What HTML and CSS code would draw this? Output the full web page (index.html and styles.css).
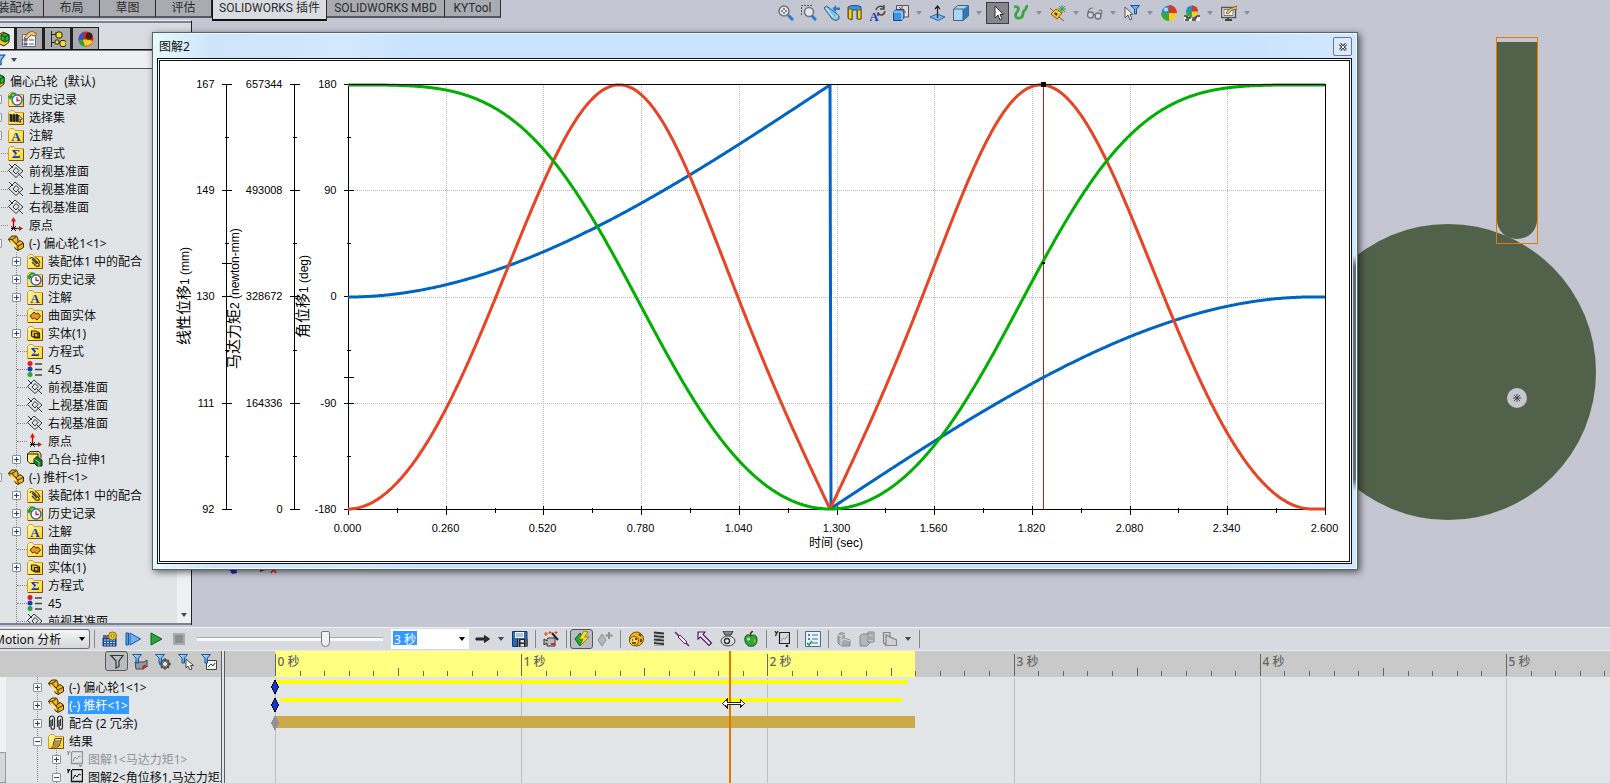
FILE: index.html
```html
<!DOCTYPE html>
<html lang="zh-CN">
<head>
    <meta charset="UTF-8">
    <meta name="viewport" content="width=device-width, initial-scale=1.0">
    <title>SOLIDWORKS Motion - 图解2</title>
    <link rel="stylesheet" href="styles.css">
</head>
<body>
    <svg class="sprite" aria-hidden="true">
        <defs>
            <linearGradient id="g-folder" x1="0" y1="0" x2="1" y2="1"><stop offset="0" stop-color="#fff9b0"/><stop offset="1" stop-color="#fbd820"/></linearGradient>
            <linearGradient id="g-blue" x1="0" y1="0" x2="1" y2="1"><stop offset="0" stop-color="#d4f0ff"/><stop offset="1" stop-color="#2a80d0"/></linearGradient>
        </defs>
        <symbol id="folder" viewBox="0 0 16 16"><path d="M.5 15.500V3.500L2.500 1.500H5.500L7 3.500H15.500V15.500Z" fill="url(#g-folder)" stroke="#d99a20"/><path d="M1 15.500H15.500V4" fill="none" stroke="#8a4a00"/></symbol>
        <symbol id="history" viewBox="0 0 16 16"><use href="#folder"/><circle cx="9" cy="9" r="5" fill="#fff" stroke="#2a66c8" stroke-width="1.500"/><path d="M9 6V9.500H12" fill="none" stroke="#e02020" stroke-width="1.300"/><path d="M2 7C2 3 5 2 8 3" fill="none" stroke="#18a028" stroke-width="2"/><path d="M0 5H5L2 9Z" fill="#18a028"/></symbol>
        <symbol id="selset" viewBox="0 0 16 16"><use href="#folder"/><path d="M2 5L4 6V13L2 12ZM5 5L7 6V13L5 12ZM8 5L10 6V13L8 12Z" fill="#333" stroke="#111" stroke-width=".8"/><path d="M10.500 6L14.500 10L12 10.500L13 13H11V10Z" fill="#fff" stroke="#111" stroke-width=".8"/></symbol>
        <symbol id="note" viewBox="0 0 16 16"><use href="#folder"/><text x="8" y="13.500" class="glyph">A</text></symbol>
        <symbol id="equation" viewBox="0 0 16 16"><use href="#folder"/><text x="8" y="13" class="glyph">Σ</text></symbol>
        <symbol id="plane" viewBox="0 0 16 16"><path d="M.5 7.500L7 1L15 8L8 14.500ZM1 1L5 5M10 10L15 15M5 8L8 4.500L11 7.500L8 11Z" fill="none" stroke="#222" stroke-width=".9"/></symbol>
        <symbol id="origin" viewBox="0 0 16 16"><path d="M5.500 12V2" stroke="#a00" stroke-width="1.300"/><path d="M3 4.500L5.500 0L8 4.500Z" fill="#e01010"/><path d="M5 11.500H13" stroke="#333" stroke-width="1.300"/><path d="M11 9L15 11.500L11 14Z" fill="#a03010"/><path d="M3 9L8 14M8 9L3 14M3 11.500H8" stroke="#111"/></symbol>
        <symbol id="part" viewBox="0 0 16 16"><path d="M.5 4L4 1H8.500L10 4V7L12 5.500L15.500 8V12.500L10 15.500L7 13.500V11L1 5.500Z" fill="#f0b818" stroke="#3a2800"/><path d="M1 4L4 4.500L8 9L10 11.500V15M10 11L15 8.500M4 4.500L8 2M8 9L11 6" fill="none" stroke="#3a2800"/><path d="M2 5L8 10.500V13L3 8Z" fill="#fff08a"/></symbol>
        <symbol id="matefolder" viewBox="0 0 16 16"><use href="#folder"/><path d="M3 6C3 4 6 4 7 6L12 11C13 13 11 14 9 13L5 9M5 6L10 11M8 5C10 4 11 6 12 8L13 10" fill="none" stroke="#3a3000" stroke-width="1.200"/></symbol>
        <symbol id="surface" viewBox="0 0 16 16"><use href="#folder"/><path d="M3 9L7 5L9 7L11 6L13.500 9L10 13L7.500 11L5.500 12Z" fill="#e89820" stroke="#4a2800"/></symbol>
        <symbol id="solid" viewBox="0 0 16 16"><use href="#folder"/><path d="M4.500 6H9L12.500 8V13H8L4.500 11ZM7.500 8.500H11V12H7.500Z" fill="#f0c020" stroke="#2a2000" stroke-width="1.200"/></symbol>
        <symbol id="dims" viewBox="0 0 16 16"><circle cx="3" cy="2.500" r="2.500" fill="#e81818"/><circle cx="3" cy="8" r="2.500" fill="#1838c0"/><circle cx="3" cy="13.500" r="2.500" fill="#18b030"/><path d="M8 3H15M8 8.500H15M8 14H15" stroke="#444" stroke-width="1.600"/></symbol>
        <symbol id="extrude" viewBox="0 0 16 16"><path d="M.5 3L3 .5H12L14 3V7" fill="#e8c850" stroke="#333"/><path d="M.5 3H11V12.500H3L.5 10Z" fill="#fbe878" stroke="#222"/><path d="M7 8L10 5.500L15 9V15H10L7 12Z" fill="#187828" stroke="#063010"/><path d="M7.500 8.500L12 11V15" stroke="#80d880" fill="none"/></symbol>
        <symbol id="assembly" viewBox="0 0 16 16"><path d="M3 5L9 1L15 4V11L10 15L3 12Z" fill="#f8c820" stroke="#3a2800"/><path d="M7 4L11 2L15 4V9L11 11L7 9Z" fill="#28b838" stroke="#0a4010"/><path d="M7 4L11 6L15 4M11 6V11" stroke="#0a4010" fill="none"/></symbol>
        <symbol id="results" viewBox="0 0 16 16"><use href="#folder"/><path d="M5 12L7 5.500H13.500L11.500 12ZM7 8H12M6 10H11M3 14H10L12 12" fill="#fff3a0" stroke="#5a3800"/></symbol>
        <symbol id="clips" viewBox="0 0 16 16"><path d="M1.500 12V4C1.500 0 6.500 0 6.500 4V12C6.500 15 3 15 3 12V5M4.500 4V11M9.500 12V4C9.500 0 14.500 0 14.500 4V12C14.500 15 11 15 11 12V5M12.500 4V11" fill="none" stroke="#333" stroke-width="1.200"/></symbol>
        <symbol id="plot" viewBox="0 0 16 16"><path d="M4.500 1V12.500H15.500V.5H5M0 0L1.500 2L3 0M1 4L1.500 2M12 14L15 17M15 14L12 17" fill="none" stroke="currentColor" stroke-width="1.300"/><path d="M6 10L8 6L10 8L12 5L14 6" fill="none" stroke="currentColor"/></symbol>

        <symbol id="zoomfit" viewBox="0 0 16 16"><path d="M10 10L15 15" stroke="#2b7bd0" stroke-width="3"/><circle cx="6" cy="6" r="5" fill="#e4e6ec" stroke="#70747c" stroke-width="1.500"/><path d="M6 3V9M3 6H9" stroke="#333" stroke-dasharray="2 2"/></symbol>
        <symbol id="zoomarea" viewBox="0 0 16 16"><path d="M.5 10V.5H12" fill="none" stroke="#555" stroke-dasharray="2 1"/><path d="M11 11L15 15" stroke="#2b7bd0" stroke-width="3"/><circle cx="8" cy="7" r="4.500" fill="#e4e6ec" stroke="#70747c" stroke-width="1.500"/></symbol>
        <symbol id="prevview" viewBox="0 0 16 16"><path d="M0 3L2.500 1L12 8L15 11L15 14L12 15.500L8 14L6 11Z" fill="#7cc0f0" stroke="#2a5a90"/><path d="M2 3L9 12M10 14L14 10" stroke="#fff"/><path d="M8.500 3.500L12 0V2.500H16V5H12V7Z" fill="#2a78d0"/></symbol>
        <symbol id="section" viewBox="0 0 16 16"><path d="M1 2C4 0 12 0 14 2V14H10V5H5V15L1 13Z" fill="#3d94dd" stroke="#1a4a80"/><path d="M1.500 4H5V14H1.500ZM10.500 5H14V14H10.500Z" fill="#f3cf28" stroke="#7a6000"/></symbol>
        <symbol id="viewrot" viewBox="0 0 16 16"><text x="4" y="16" class="glyph">A</text><path d="M6 5C7 1 12 0 14 3M14 0V4H10M15 6C14 11 10 11 8 8M8 11V7" fill="none" stroke="#444" stroke-width="1.400"/></symbol>
        <symbol id="cubes" viewBox="0 0 16 16"><path d="M3.500 5V.5H15.500V12H11" fill="#ddd" stroke="#555"/><path d="M.5 7L3 4.500H11V12L9 15.500H.5Z" fill="#3d94dd" stroke="#174f88"/><path d="M.5 7H9V15" fill="none" stroke="#c8e8ff"/><path d="M9 1V4M13 7H10M6 2L8 4" stroke="#d02818"/></symbol>
        <symbol id="normal" viewBox="0 0 16 16"><path d="M0 12L7 9L15 12L8 15.500Z" fill="#78b8ec" stroke="#2468a8"/><path d="M7.500 13V2M5 4L7.500 1L10 4" fill="none" stroke="#222" stroke-width="1.200"/></symbol>
        <symbol id="cube" viewBox="0 0 16 16"><path d="M.5 4L5 .5H15.500V11L10 15.500H.5Z" fill="#a8d8f8" stroke="#4a6078"/><path d="M10 4L15.500 .5V11L10 15.500Z" fill="#2878c8"/><path d="M1 4H10V15" fill="none" stroke="#4a6078"/></symbol>
        <symbol id="arrow" viewBox="0 0 16 16"><path d="M5 1V13L8 10L10 15L12 14L10 9.500H13.500Z" fill="#fff" stroke="#333"/></symbol>
        <symbol id="squiggle" viewBox="0 0 16 16"><path d="M1 2C5 1 7 3 4 7C1 11 3 14 7 13C12 12 8 7 12 5C14 4 12 1 15 1" fill="none" stroke="#3aa648" stroke-width="2.800"/></symbol>
        <symbol id="tag" viewBox="0 0 16 16"><path d="M1 9L6 4L12 8L7 14Z" fill="#f6c820" stroke="#806000"/><path d="M5 8L7 10" stroke="#222" stroke-width="2"/><path d="M0 3L4 7M9 12L14 16" stroke="#a05010"/><path d="M12 0V8M8 4H16M9 1L15 7M15 1L9 7" stroke="#2f9a38"/></symbol>
        <symbol id="glasses" viewBox="0 0 16 16"><circle cx="3.500" cy="10" r="3" fill="#d8d8dc" stroke="#70737a" stroke-width="1.400"/><circle cx="11" cy="11" r="3" fill="#d8d8dc" stroke="#70737a" stroke-width="1.400"/><path d="M6 10H8M1 8C1 4 3 3 6 3M14 10C16 6 14 4 12 6" fill="none" stroke="#70737a" stroke-width="1.200"/></symbol>
        <symbol id="selfilter" viewBox="0 0 16 16"><path d="M1 2V13L4 10L6 15L8 14L6 9.500H9Z" fill="#eee" stroke="#555"/><path d="M6.500 .5H15.500L12.500 4V9H10.500V4Z" fill="#69b0f0" stroke="#1c50a8"/></symbol>
        <symbol id="ball" viewBox="0 0 16 16"><circle cx="8" cy="8" r="7.500" fill="#288ae0"/><path d="M8 0A8 8 0 0 1 16 8H8Z" fill="#d83820"/><path d="M16 8A8 8 0 0 1 8 16V8Z" fill="#f4d020"/><path d="M8 16A8 8 0 0 1 0 8H8Z" fill="#38a838"/><circle cx="5" cy="4.500" r="2" fill="#bfe2ff"/></symbol>
        <symbol id="scene" viewBox="0 0 16 16"><path d="M0 10H16V16H0Z" fill="#eee"/><path d="M0 11H3V13H6V11H9V13H12V11H16M1 15H5M8 15H12" stroke="#333" stroke-width="1.500" fill="none"/><circle cx="8" cy="6.500" r="6" fill="#288ae0"/><path d="M8 .5A6 6 0 0 1 14 6.500H8Z" fill="#d83820"/><path d="M8 6.500V12.500A6 6 0 0 1 2 6.500Z" fill="#38a838"/><path d="M14 6.500A6 6 0 0 1 8 12.500V6.500Z" fill="#f4d020"/></symbol>
        <symbol id="monitor" viewBox="0 0 16 16"><path d="M.5 2.500H14.500V12.500H.5Z" fill="#e4e4e4" stroke="#555" stroke-width="1.500"/><path d="M3 4.500H12V10.500H3Z" fill="#fff" stroke="#777"/><path d="M4 15H11M7 13V15" stroke="#444" stroke-width="2"/><path d="M5 8L8 4L16 1V4L11 5L7 9Z" fill="#eac070" stroke="#8a6428"/></symbol>

        <symbol id="propmgr" viewBox="0 0 16 16"><path d="M.5 3.500H13.500V15.500H.5Z" fill="#fff" stroke="#667"/><path d="M2 8H5V10H2ZM2 12H5V14H2ZM7 9H12M7 13H12" fill="#88b" stroke="#558"/><path d="M2 7L6 2L10 0L15 3L13 5L9 4L5 8Z" fill="#f2c47c" stroke="#8a5a20"/></symbol>
        <symbol id="confmgr" viewBox="0 0 16 16"><path d="M1.500 0V16M2 3.500H6M2 11.500H10M6 4V1" fill="none" stroke="#222"/><rect x="6" y="1" width="6" height="6" rx="2" fill="#f8e020" stroke="#222"/><rect x="10" y="9.500" width="6" height="6" rx="2" fill="#f8e020" stroke="#222"/><rect x="5" y="9" width="4" height="4" rx="1" fill="#f8e020" stroke="#222"/></symbol>
        <symbol id="dispmgr" viewBox="0 0 16 16"><circle cx="8" cy="8" r="7.500" fill="#d82818"/><path d="M1 10A7.500 7.500 0 0 0 15 10C10 8 5 8 1 10Z" fill="#f6d020"/><path d="M.5 8C1 4 4 1 7 .5C5 4 4 8 5 9L1 10Z" fill="#2858d0"/><path d="M1 10L5 9L7 15.500C3 15 1 13 1 10Z" fill="#28a038"/><circle cx="11" cy="5" r="3.500" fill="#402018"/></symbol>
        <symbol id="funnel" viewBox="0 0 16 16"><path d="M.5 1.500H14.500L9.500 8V14L6 15V8Z" fill="url(#g-blue)" stroke="#1858a8" stroke-width="1.500"/></symbol>
        <symbol id="funnel-line" viewBox="0 0 16 16"><path d="M2 2.500H14L10 8V13.500L7 15V8Z" fill="none" stroke="#333" stroke-width="1.200"/></symbol>
        <symbol id="f-anim" viewBox="0 0 16 16"><path d="M3 8H12L15 6V13L12 11V15H4Z" fill="#999" stroke="#444"/><path d="M10 13H14" stroke="#d22" stroke-width="2"/><path d="M.5 .5H9.500L6.500 4V9H4V4Z" fill="url(#g-blue)" stroke="#1858a8"/></symbol>
        <symbol id="f-drive" viewBox="0 0 16 16"><circle cx="10" cy="10" r="4" fill="#ccc" stroke="#555" stroke-width="2"/><path d="M10 4V16M4 10H16M6 6L14 14M14 6L6 14" stroke="#555" stroke-width="1.300"/><circle cx="10" cy="10" r="2" fill="#eee"/><path d="M.5 .5H9.500L6.500 4V9H4V4Z" fill="url(#g-blue)" stroke="#1858a8"/></symbol>
        <symbol id="f-sel" viewBox="0 0 16 16"><path d="M8 5V14L10 12L12 16L14 15L12.500 11.500H15.500Z" fill="#fff" stroke="#444"/><path d="M.5 .5H9.500L6.500 4V9H4V4Z" fill="url(#g-blue)" stroke="#1858a8"/></symbol>
        <symbol id="f-res" viewBox="0 0 16 16"><path d="M5.500 6.500H15.500V15.500H5.500ZM7 13L10 10L12 12L14 9" fill="#f4f4f4" stroke="#444"/><path d="M.5 .5H9.500L6.500 4V9H4V4Z" fill="url(#g-blue)" stroke="#1858a8"/></symbol>

        <symbol id="calc" viewBox="0 0 16 16"><path d="M1 7H14V15H1Z" fill="#2858b0" stroke="#183060"/><path d="M2 9H13M2 11.500H13M2 14H13" stroke="#bcd8ff" stroke-dasharray="2 1"/><path d="M1 4H6V7H1Z" fill="#667"/><circle cx="10.500" cy="5" r="4" fill="#f8d020" stroke="#8a6000"/><circle cx="10.500" cy="5" r="1.500" fill="#fff" stroke="#8a6000"/></symbol>
        <symbol id="playstart" viewBox="0 0 16 16"><path d="M1 2H3.500V14H1Z" fill="#48a0e8" stroke="#1858a8"/><path d="M5 2L15.500 8L5 14Z" fill="#68b4f4" stroke="#1858a8"/></symbol>
        <symbol id="play" viewBox="0 0 16 16"><path d="M3 2L14 8L3 14Z" fill="#28a838" stroke="#106018"/></symbol>
        <symbol id="stop" viewBox="0 0 16 16"><path d="M3 3H13V13H3Z" fill="#8c8f94" stroke="#a8abb0" stroke-width="2"/></symbol>
        <symbol id="rarrow" viewBox="0 0 16 16"><path d="M1 7H9.500V4.500L14.500 8L9.500 11.500V9H1Z" fill="#333" stroke="#222"/></symbol>
        <symbol id="save" viewBox="0 0 16 16"><path d="M.5 .5H15V15.500H.5Z" fill="#2868b8" stroke="#183868"/><path d="M3 1H12V7H3Z" fill="#eef6ff"/><path d="M4 3H11M4 5H11" stroke="#88a"/><path d="M5 8H15.500V15.500H5Z" fill="#222"/><path d="M6.500 8.500V15.500M14 8.500V15.500" stroke="#eee" stroke-dasharray="1 1"/><path d="M8.500 9H12V11.500H8.500ZM8.500 13H12V15.500H8.500Z" fill="#ddd"/></symbol>
        <symbol id="camera" viewBox="0 0 16 16"><path d="M1 8L4 10V8.500L5 7H12V15H4V12L1 14Z" fill="#bbb" stroke="#333"/><path d="M8 13H12" stroke="#e22" stroke-width="2"/><path d="M9 2L15 9" stroke="#222" stroke-width="2"/><path d="M3 1V5M1 3H5M7 0V3M5.500 1.500H8.500M13 0V3M11.500 1.500H14.500" stroke="#e04010"/></symbol>
        <symbol id="autokey" viewBox="0 0 16 16"><path d="M1 8L6 2L10 8L6 15Z" fill="#28a838" stroke="#0c5818"/><path d="M10 0L5 8H9L6 15L15 6H10.500L14 1Z" fill="#f8e020" stroke="#806000" stroke-width=".7"/></symbol>
        <symbol id="addkey" viewBox="0 0 16 16"><path d="M1 9L5 3L9 9L5 15Z" fill="#b4b7bb" stroke="#8e9196"/><path d="M12 1V8M8.500 4.500H15.500" stroke="#8e9196" stroke-width="2"/></symbol>
        <symbol id="motor" viewBox="0 0 16 16"><circle cx="8.500" cy="8" r="7" fill="#f0b010" stroke="#7a5000"/><circle cx="6" cy="10" r="4.500" fill="#ffd840" stroke="#7a5000"/><path d="M4 9H5M7 8H9M4 12H8M11 3L13 5M13 8V11" stroke="#3a2400" stroke-width="1.500"/></symbol>
        <symbol id="spring" viewBox="0 0 16 16"><path d="M3 1.500L13 2.500M3 5L13 6M3 8.500L13 9.500M3 12L13 13" stroke="#333" stroke-width="2.200"/><path d="M3 3.500L13 4.500M3 7L13 8M3 10.500L13 11.500M3 14.500H13" stroke="#aaa"/></symbol>
        <symbol id="damper" viewBox="0 0 16 16"><path d="M1 1L6 6M12 12L15 15" stroke="#802080" stroke-width="1.600"/><path d="M4 6L6 4L13 11L11 13Z" fill="#f4eef8" stroke="#602070"/></symbol>
        <symbol id="force" viewBox="0 0 16 16"><path d="M1 1H8L6 3.500L14.500 12L12 14.500L3.500 6L1 8Z" fill="#ece4f0" stroke="#501860" stroke-width="1.200"/></symbol>
        <symbol id="contact" viewBox="0 0 16 16"><path d="M3 0H13L11 4H5Z" fill="#889" stroke="#333"/><ellipse cx="8" cy="10" rx="7" ry="5" fill="#dcdfe4" stroke="#444"/><circle cx="7" cy="10" r="2.500" fill="#fff" stroke="#333" stroke-width="1.500"/></symbol>
        <symbol id="gravity" viewBox="0 0 16 16"><path d="M8 5C4 2 1 5 2 10C3 14 6 16 8 15C11 16 14 13 14 9C14 4 11 3 8 5Z" fill="#30a838" stroke="#0c5818"/><path d="M8 5C7 3 8 1 10 0" stroke="#503010" stroke-width="1.500" fill="none"/><circle cx="5.500" cy="8" r="1.500" fill="#c0f0b0"/><path d="M11 8L13 10L11 12Z" fill="#e8a020"/></symbol>
        <symbol id="plotbtn" viewBox="0 0 16 16"><path d="M5.500 1V12.500H15.500V1.500H5M1 0L2.500 2.500L4 0M1.500 5L2.500 2.500M12 14L14 16M14 14L12 16" fill="none" stroke="#222" stroke-width="1.200"/><path d="M7 10L9 7L11 8L14 4" fill="none" stroke="#999"/></symbol>
        <symbol id="list" viewBox="0 0 16 16"><path d="M.5 .5H15.500V15.500H.5Z" fill="#e8f2fa" stroke="#506890"/><path d="M7 4H13M7 8H13M7 12H13" stroke="#506890"/><path d="M3 3H5V5H3ZM3 7H5V9H3Z" fill="#5080c0"/><path d="M2 12L4 14L7 10" fill="none" stroke="#20a030" stroke-width="1.600"/></symbol>
        <symbol id="sim1" viewBox="0 0 16 16"><path d="M2 4L4 2H8V7L14 9V15H5L2 12Z" fill="#a6a9ae" stroke="#84878c"/><path d="M5 15V5L8 3M5 10L8 8L14 10M5 5L2 4" fill="none" stroke="#d8dade"/></symbol>
        <symbol id="sim2" viewBox="0 0 16 16"><path d="M1 5L4 3H11V12L8 15H1Z" fill="#b2b5ba" stroke="#84878c"/><path d="M9 1H15V11H9Z" fill="#c8cace" stroke="#84878c"/><path d="M10 3H14M10 6H14M10 8H14" stroke="#84878c"/></symbol>
        <symbol id="sim3" viewBox="0 0 16 16"><path d="M1.500 1.500H8L8 6L14.500 9V14.500H4L1.500 12ZM4 14V4L8 6" fill="#d0d2d6" stroke="#84878c" stroke-width="1.200"/></symbol>
    </svg>

    <div class="app">
        <header class="topbar">
            <nav class="tabs">
                <button class="tab tab-first">装配体</button>
                <button class="tab tab-short">布局</button>
                <button class="tab tab-short">草图</button>
                <button class="tab tab-short">评估</button>
                <button class="tab tab-addin active">SOLIDWORKS 插件</button>
                <button class="tab tab-mbd">SOLIDWORKS MBD</button>
                <button class="tab tab-short">KYTool</button>
            </nav>
            <div class="view-tools">
                <button class="tool" aria-label="整屏显示全图"><svg><use href="#zoomfit"/></svg></button>
                <button class="tool" aria-label="局部放大"><svg><use href="#zoomarea"/></svg></button>
                <button class="tool" aria-label="上一视图"><svg><use href="#prevview"/></svg></button>
                <button class="tool" aria-label="剖面视图"><svg><use href="#section"/></svg></button>
                <button class="tool" aria-label="动态注解视图"><svg><use href="#viewrot"/></svg></button>
                <button class="tool" aria-label="视图定向"><svg><use href="#cubes"/></svg></button>
                <button class="drop" aria-label="更多"></button>
                <button class="tool" aria-label="正视于"><svg><use href="#normal"/></svg></button>
                <button class="tool" aria-label="显示样式"><svg><use href="#cube"/></svg></button>
                <button class="drop" aria-label="更多"></button>
                <button class="tool dark" aria-label="选择"><svg><use href="#arrow"/></svg></button>
                <button class="tool" aria-label="草图"><svg><use href="#squiggle"/></svg></button>
                <button class="drop" aria-label="更多"></button>
                <button class="tool" aria-label="智能尺寸"><svg><use href="#tag"/></svg></button>
                <button class="drop" aria-label="更多"></button>
                <button class="tool" aria-label="隐藏/显示项目"><svg><use href="#glasses"/></svg></button>
                <button class="drop" aria-label="更多"></button>
                <button class="tool" aria-label="选择过滤器"><svg><use href="#selfilter"/></svg></button>
                <button class="drop" aria-label="更多"></button>
                <button class="tool" aria-label="编辑外观"><svg><use href="#ball"/></svg></button>
                <button class="tool" aria-label="应用布景"><svg><use href="#scene"/></svg></button>
                <button class="drop" aria-label="更多"></button>
                <button class="tool" aria-label="视图设定"><svg><use href="#monitor"/></svg></button>
                <button class="drop" aria-label="更多"></button>
            </div>
        </header>

        <main class="workspace">
            <aside class="panel">
                <div class="panel-tabs">
                    <button class="ptab ptab-first" aria-label="设计树"><svg><use href="#assembly"/></svg></button>
                    <button class="ptab" aria-label="属性"><svg><use href="#propmgr"/></svg></button>
                    <button class="ptab" aria-label="配置"><svg><use href="#confmgr"/></svg></button>
                    <button class="ptab" aria-label="外观"><svg><use href="#dispmgr"/></svg></button>
                </div>
                <div class="panel-filter">
                    <svg><use href="#funnel"/></svg>
                    <button class="drop drop-dark" aria-label="过滤"></button>
                </div>
                <div class="panel-body">
                    <div class="tree-wrap">
                        <div class="node root"><svg><use href="#assembly"/></svg>偏心凸轮&nbsp; (默认)</div>
                        <ul class="tree">
                            <li><div class="node"><button class="toggle" aria-label="展开"></button><svg><use href="#history"/></svg>历史记录</div></li>
                            <li><div class="node"><button class="toggle" aria-label="展开"></button><svg><use href="#selset"/></svg>选择集</div></li>
                            <li><div class="node"><button class="toggle" aria-label="展开"></button><svg><use href="#note"/></svg>注解</div></li>
                            <li><div class="node"><span class="leaf"></span><svg><use href="#equation"/></svg>方程式</div></li>
                            <li><div class="node"><span class="leaf"></span><svg><use href="#plane"/></svg>前视基准面</div></li>
                            <li><div class="node"><span class="leaf"></span><svg><use href="#plane"/></svg>上视基准面</div></li>
                            <li><div class="node"><span class="leaf"></span><svg><use href="#plane"/></svg>右视基准面</div></li>
                            <li><div class="node"><span class="leaf"></span><svg><use href="#origin"/></svg>原点</div></li>
                            <li>
                                <div class="node"><button class="toggle open" aria-label="折叠"></button><svg><use href="#part"/></svg>(-) 偏心轮1&lt;1&gt;</div>
                                <ul>
                                    <li><div class="node"><button class="toggle" aria-label="展开"></button><svg><use href="#matefolder"/></svg>装配体1 中的配合</div></li>
                                    <li><div class="node"><button class="toggle" aria-label="展开"></button><svg><use href="#history"/></svg>历史记录</div></li>
                                    <li><div class="node"><button class="toggle" aria-label="展开"></button><svg><use href="#note"/></svg>注解</div></li>
                                    <li><div class="node"><span class="leaf"></span><svg><use href="#surface"/></svg>曲面实体</div></li>
                                    <li><div class="node"><button class="toggle" aria-label="展开"></button><svg><use href="#solid"/></svg>实体(1)</div></li>
                                    <li><div class="node"><span class="leaf"></span><svg><use href="#equation"/></svg>方程式</div></li>
                                    <li><div class="node"><span class="leaf"></span><svg><use href="#dims"/></svg>45</div></li>
                                    <li><div class="node"><span class="leaf"></span><svg><use href="#plane"/></svg>前视基准面</div></li>
                                    <li><div class="node"><span class="leaf"></span><svg><use href="#plane"/></svg>上视基准面</div></li>
                                    <li><div class="node"><span class="leaf"></span><svg><use href="#plane"/></svg>右视基准面</div></li>
                                    <li><div class="node"><span class="leaf"></span><svg><use href="#origin"/></svg>原点</div></li>
                                    <li><div class="node"><button class="toggle" aria-label="展开"></button><svg><use href="#extrude"/></svg>凸台-拉伸1</div></li>
                                </ul>
                            </li>
                            <li>
                                <div class="node"><button class="toggle open" aria-label="折叠"></button><svg><use href="#part"/></svg>(-) 推杆&lt;1&gt;</div>
                                <ul>
                                    <li><div class="node"><button class="toggle" aria-label="展开"></button><svg><use href="#matefolder"/></svg>装配体1 中的配合</div></li>
                                    <li><div class="node"><button class="toggle" aria-label="展开"></button><svg><use href="#history"/></svg>历史记录</div></li>
                                    <li><div class="node"><button class="toggle" aria-label="展开"></button><svg><use href="#note"/></svg>注解</div></li>
                                    <li><div class="node"><span class="leaf"></span><svg><use href="#surface"/></svg>曲面实体</div></li>
                                    <li><div class="node"><button class="toggle" aria-label="展开"></button><svg><use href="#solid"/></svg>实体(1)</div></li>
                                    <li><div class="node"><span class="leaf"></span><svg><use href="#equation"/></svg>方程式</div></li>
                                    <li><div class="node"><span class="leaf"></span><svg><use href="#dims"/></svg>45</div></li>
                                    <li><div class="node"><span class="leaf"></span><svg><use href="#plane"/></svg>前视基准面</div></li>
                                </ul>
                            </li>
                        </ul>
                    </div>
                    <div class="scrollbar"><button class="drop drop-dark" aria-label="向下滚动"></button></div>
                </div>
            </aside>

            <section class="viewport">
                <svg class="triad" viewBox="0 0 50 12"><path d="M6 5H38" stroke="#7a2010" stroke-width="2"/><path d="M0 3L8 1L9 9L4 10Z" fill="#1030c0"/><path d="M32 2L40 5L32 8Z" fill="#7a2010"/><path d="M43 2L48 9M48 2L43 9" stroke="#f01818" stroke-width="1.500"/></svg>
                <svg class="model" viewBox="1340 0 270 607">
                    <path d="M1497 22H1537V200A20 19 0 0 1 1497 200Z" fill="#52614a"/>
                    <circle cx="1448" cy="352" r="148" fill="#52614a"/>
                    <circle cx="1517" cy="378" r="10" fill="#c4c7d2"/>
                    <path d="M1513 378H1521M1517 374V382M1514 375L1520 381M1520 375L1514 381" stroke="#444" stroke-width="1"/>
                    <rect x="1496.500" y="17.500" width="41" height="206" fill="none" stroke="#e87a00"/>
                </svg>
            </section>
        </main>

        <section class="motion">
            <div class="motion-bar">
                <div class="study">
                    <select aria-label="算例类型"><option>Motion 分析</option></select>
                </div>
                <span class="sep"></span>
                <button class="tool" aria-label="计算"><svg><use href="#calc"/></svg></button>
                <button class="tool" aria-label="从头播放"><svg><use href="#playstart"/></svg></button>
                <button class="tool" aria-label="播放"><svg><use href="#play"/></svg></button>
                <button class="tool" aria-label="停止"><svg><use href="#stop"/></svg></button>
                <input type="range" class="scrub" aria-label="时间" min="0" max="100" value="70">
                <div class="speed">
                    <input type="text" aria-label="播放时长" value="3 秒">
                    <button class="drop drop-black" aria-label="更多"></button>
                </div>
                <button class="tool" aria-label="播放模式"><svg><use href="#rarrow"/></svg></button>
                <button class="drop drop-dark" aria-label="更多"></button>
                <button class="tool" aria-label="保存动画"><svg><use href="#save"/></svg></button>
                <span class="sep"></span>
                <button class="tool" aria-label="动画向导"><svg><use href="#camera"/></svg></button>
                <span class="sep"></span>
                <button class="tool pressed" aria-label="自动键码"><svg><use href="#autokey"/></svg></button>
                <button class="tool" aria-label="添加键码"><svg><use href="#addkey"/></svg></button>
                <span class="sep"></span>
                <button class="tool" aria-label="马达"><svg><use href="#motor"/></svg></button>
                <button class="tool" aria-label="弹簧"><svg><use href="#spring"/></svg></button>
                <button class="tool" aria-label="阻尼"><svg><use href="#damper"/></svg></button>
                <button class="tool" aria-label="力"><svg><use href="#force"/></svg></button>
                <button class="tool" aria-label="接触"><svg><use href="#contact"/></svg></button>
                <button class="tool" aria-label="引力"><svg><use href="#gravity"/></svg></button>
                <span class="sep"></span>
                <button class="tool" aria-label="结果和图解"><svg><use href="#plotbtn"/></svg></button>
                <span class="sep"></span>
                <button class="tool" aria-label="运动算例属性"><svg><use href="#list"/></svg></button>
                <span class="sep"></span>
                <button class="tool" aria-label="模拟设置"><svg><use href="#sim1"/></svg></button>
                <button class="tool" aria-label="计算模拟"><svg><use href="#sim2"/></svg></button>
                <button class="tool" aria-label="模拟结果"><svg><use href="#sim3"/></svg></button>
                <button class="drop drop-dark" aria-label="更多"></button>
                <span class="sep"></span>
            </div>
            <div class="motion-body">
                <div class="motion-side">
                    <div class="motion-filter">
                        <button class="tool pressed" aria-label="无过滤"><svg><use href="#funnel-line"/></svg></button>
                        <button class="tool" aria-label="过滤动画"><svg><use href="#f-anim"/></svg></button>
                        <button class="tool" aria-label="过滤驱动"><svg><use href="#f-drive"/></svg></button>
                        <button class="tool" aria-label="过滤选定"><svg><use href="#f-sel"/></svg></button>
                        <button class="tool" aria-label="过滤结果"><svg><use href="#f-res"/></svg></button>
                    </div>
                    <div class="motion-tree">
                        <div class="side-scroll"><span class="thumb"></span></div>
                        <ul class="tree">
                            <li><div class="node"><button class="toggle" aria-label="展开"></button><svg><use href="#part"/></svg>(-) 偏心轮1&lt;1&gt;</div></li>
                            <li><div class="node"><button class="toggle" aria-label="展开"></button><svg><use href="#part"/></svg><span class="selected">(-) 推杆&lt;1&gt;</span></div></li>
                            <li><div class="node"><button class="toggle" aria-label="展开"></button><svg><use href="#clips"/></svg>配合 (2 冗余)</div></li>
                            <li>
                                <div class="node"><button class="toggle open" aria-label="折叠"></button><svg><use href="#results"/></svg>结果</div>
                                <ul>
                                    <li><div class="node muted"><button class="toggle" aria-label="展开"></button><svg><use href="#plot"/></svg>图解1&lt;马达力矩1&gt;</div></li>
                                    <li><div class="node"><button class="toggle open" aria-label="折叠"></button><svg><use href="#plot"/></svg>图解2&lt;角位移1,马达力矩2,线性位移1&gt;</div></li>
                                </ul>
                            </li>
                        </ul>
                    </div>
                </div>
                <div class="timeline"><svg id="timeline"></svg></div>
            </div>
        </section>

        <section class="dialog" role="dialog" aria-label="图解2">
            <div class="dialog-title">
                <span>图解2</span>
                <button class="close" aria-label="关闭"><svg viewBox="0 0 8 8"><path d="M1 1L7 7M7 1L1 7" stroke="#3c4450" stroke-width="3"/><path d="M1 1L7 7M7 1L1 7" stroke="#fff" stroke-width="1"/></svg></button>
            </div>
            <div class="dialog-content">
                <svg id="chart" viewBox="160 61 1189 500"></svg>
            </div>
        </section>
    </div>

    <script src="script.js"></script>
</body>
</html>
```

FILE: styles.css
```css
* {
    box-sizing: border-box;
}
body {
    margin: 0;
    font-family: "Noto Sans", "Noto Sans CJK SC", sans-serif;
    font-size: 12px;
    color: #111;
    background-color: #c4c7d2;
    overflow: hidden;
}
button, select, input {
    font: inherit;
    color: inherit;
    padding: 0;
    border: none;
    background: none;
}
svg {
    display: block;
    flex: none;
}
.sprite {
    position: absolute;
    width: 0;
    height: 0;
}
.glyph {
    font: bold 13px "Liberation Serif", serif;
    fill: #1838b8;
    text-anchor: middle;
}
.app {
    position: relative;
    display: flex;
    flex-direction: column;
    height: 100vh;
}

/* top bar */
.topbar {
    display: flex;
    align-items: flex-start;
    height: 20px;
}
.tabs {
    display: flex;
    align-items: flex-start;
    flex: none;
    font-family: Roboto, "Noto Sans CJK SC", sans-serif;
}
.tab {
    height: 18px;
    padding-bottom: 1px;
    line-height: 14px;
    color: #2c2c30;
    background-color: #a9abb0;
    border-right: 1px solid #2c2c30;
    border-bottom: 2px solid #55585e;
    white-space: nowrap;
}
.tab-first {
    width: 56px;
    margin-left: -12px;
}
.tab-short {
    width: 56px;
}
.tab-addin {
    width: 115px;
}
.tab-mbd {
    width: 118px;
}
.tab.active {
    height: 21px;
    padding-bottom: 4px;
    background-color: #d9dce1;
    border-left: 1px solid #111;
    border-bottom: 2px solid #111;
    position: relative;
    z-index: 1;
}
.view-tools {
    display: flex;
    align-items: center;
    height: 26px;
    margin-left: auto;
    margin-right: 356px;
}
.tool {
    display: flex;
    align-items: center;
    justify-content: center;
    flex: none;
    width: 23px;
    height: 22px;
}
.tool svg {
    width: 16px;
    height: 16px;
}
.tool.dark {
    background-color: #85868c;
    border: 1px solid #3c3e44;
}
.tool.pressed {
    height: 20px;
    background-color: #b9bcc1;
    border: 1px solid #55585e;
    border-radius: 3px;
}
.drop {
    display: flex;
    align-items: center;
    justify-content: center;
    flex: none;
    width: 14px;
    height: 16px;
}
.drop::after, .study::after {
    content: "";
    border: 3px solid transparent;
    border-top: 4px solid #8c8f98;
    border-bottom: none;
}
.drop-dark::after {
    border-top-color: #44474c;
}
.drop-black::after, .study::after {
    border-top-color: #000;
}

/* feature tree */
.workspace {
    display: flex;
    flex: 1;
    min-height: 0;
}
.panel {
    display: flex;
    flex-direction: column;
    flex: none;
    width: 192px;
    margin-bottom: 2px;
    background-color: #d8dbdf;
    border-top: 1px solid #eceef0;
    border-right: 1px solid #222;
}
.panel-tabs {
    display: flex;
    align-items: flex-end;
    height: 29px;
    border-top: 2px solid #7c8294;
    border-bottom: 1px solid #111;
}
.ptab {
    display: flex;
    align-items: center;
    justify-content: center;
    width: 28px;
    height: 22px;
    background-color: #a9abb0;
    border: 1px solid #222;
    border-left-width: 2px;
    border-bottom: none;
}
.ptab-first {
    width: 15px;
    background-color: #e8eaec;
    border-left: none;
}
.ptab-first svg {
    margin-left: -10px;
}
.ptab svg {
    width: 16px;
    height: 16px;
}
.panel-filter {
    display: flex;
    align-items: center;
    height: 19px;
    background-color: #eeeff2;
    border-top: 1px solid #777;
    border-bottom: 1px solid #555;
}
.panel-filter svg {
    width: 14px;
    height: 12px;
    margin-left: -7px;
}
.panel-body {
    display: flex;
    flex: 1;
    min-height: 0;
    background-color: #e1e4e7;
    border-bottom: 2px solid #7c8294;
}
.tree-wrap {
    flex: 1;
    padding-top: 3px;
    overflow: hidden;
}
.scrollbar {
    display: flex;
    align-items: flex-end;
    width: 14px;
    background-color: #eef0f1;
}
.tree, .tree ul {
    list-style: none;
    margin: 0;
    padding: 0;
    background: repeating-linear-gradient(#888 0 1px, transparent 1px 2px) 4px 0 / 1px 100% no-repeat;
}
.tree-wrap .tree {
    margin-left: -7px;
}
.tree ul {
    padding-left: 19px;
    background-position: 23px 0;
}
.node {
    display: flex;
    align-items: center;
    height: 18px;
    white-space: nowrap;
}
.node svg {
    width: 16px;
    height: 16px;
    margin-right: 5px;
}
.node.root svg {
    margin-left: -11px;
}
.toggle {
    flex: none;
    width: 9px;
    height: 9px;
    margin-right: 6px;
    border: 1px solid #8b8f96;
    border-radius: 1px;
    background:
        linear-gradient(#2b3f90, #2b3f90) center / 5px 1px no-repeat,
        linear-gradient(#2b3f90, #2b3f90) center / 1px 5px no-repeat,
        #fff;
}
.toggle.open {
    background: linear-gradient(#2b3f90, #2b3f90) center / 5px 1px no-repeat, #fff;
}
.leaf {
    flex: none;
    width: 10px;
    margin-left: 5px;
    border-top: 1px dotted #888;
}
.selected {
    margin-left: -1px;
    padding: 0 1px;
    color: #fff;
    background-color: #3399ff;
}
.muted {
    color: #909498;
}

/* graphics area */
.viewport {
    display: flex;
    justify-content: space-between;
    align-items: flex-start;
    flex: 1;
    min-width: 0;
}
.triad {
    width: 50px;
    height: 12px;
    margin-top: 544px;
    margin-left: 36px;
}
.model {
    width: 270px;
    height: 607px;
}

/* motion study */
.motion {
    display: flex;
    flex-direction: column;
    flex: none;
    height: 156px;
    background-color: #e1e5e8;
}
.motion-bar {
    display: flex;
    align-items: center;
    flex: none;
    height: 24px;
    background-color: #d7dadf;
    border-top: 1px solid #eef0f2;
    border-bottom: 1px solid #e8eaec;
}
.study {
    display: flex;
    align-items: center;
    flex: none;
    width: 90px;
    height: 20px;
    padding-right: 4px;
    border: 1px solid #6d7075;
    border-left: none;
    border-radius: 0 3px 3px 0;
    background: linear-gradient(#f6f6f6, #d4d6d8);
}
.study select {
    appearance: none;
    flex: 1;
    min-width: 0;
    height: 18px;
    text-indent: -6px;
}
.sep {
    flex: none;
    width: 8px;
    height: 18px;
    background: linear-gradient(#85888e, #85888e) center / 1px 100% no-repeat;
}
.scrub {
    appearance: none;
    flex: none;
    width: 186px;
    height: 20px;
    margin: 0 8px 0 7px;
    background: linear-gradient(#f8f9fa, #f8f9fa) center / 100% 3px no-repeat;
}
.scrub::-webkit-slider-runnable-track {
    height: 16px;
    background: linear-gradient(#a8abb0, #a8abb0) 0 6px / 100% 1px no-repeat;
}
.scrub::-webkit-slider-thumb {
    appearance: none;
    width: 9px;
    height: 16px;
    border: 1px solid #74777c;
    border-radius: 2px 2px 5px 5px;
    background-color: #f0f1f2;
}
.speed {
    display: flex;
    align-items: center;
    flex: none;
    width: 78px;
    height: 20px;
    margin-right: 2px;
    background-color: #fff;
}
.speed input {
    flex: 1;
    min-width: 0;
    height: 16px;
    padding-left: 3px;
    color: #fff;
    background: linear-gradient(#3399ff, #3399ff) 2px 0 / 24px 14px no-repeat;
}
.motion-body {
    display: flex;
    flex: 1;
    min-height: 0;
}
.motion-side {
    display: flex;
    flex-direction: column;
    flex: none;
    width: 225px;
    border-right: 4px double #5a5d62;
}
.motion-filter {
    display: flex;
    flex: none;
    height: 26px;
    padding-left: 105px;
    background-color: #c9c9c9;
}
.motion-tree {
    display: flex;
    flex: 1;
    min-height: 0;
    overflow: hidden;
}
.motion-tree .tree {
    flex: 1;
    padding-top: 1px;
    margin-left: 27px;
}
.side-scroll {
    display: flex;
    flex-direction: column;
    justify-content: flex-end;
    flex: none;
    width: 6px;
    background-color: #eff1f2;
}
.thumb {
    height: 31px;
    border: 1px solid #95989d;
    border-left: none;
    background-color: #d4d6da;
}
.timeline {
    flex: 1;
    min-width: 0;
}
.timeline svg {
    width: 100%;
    height: 100%;
}
.timeline text {
    fill: #666;
    font-weight: 500;
}

/* plot window */
.dialog {
    position: absolute;
    left: 152px;
    right: 252px;
    top: 32px;
    padding: 0 5px 5px 4px;
    border: 1px solid #56626e;
    background:
        linear-gradient(transparent, #5f7375 5%, #5f7375 95%, transparent) right 1px top 222px / 3px 236px no-repeat,
        linear-gradient(to right, #e4fafd 0, #cfe4fa 60px, #d3e7fd 200px, #c8e3ff 260px, #c8e3ff 90%, #d2e7ff);
    box-shadow: inset 0 0 0 1px #eef8ff, 2px 2px 7px rgba(0, 0, 0, 0.6);
}
.dialog-title {
    display: flex;
    align-items: center;
    justify-content: space-between;
    height: 25px;
    padding-left: 2px;
}
.close {
    display: flex;
    align-items: center;
    justify-content: center;
    width: 19px;
    height: 19px;
    margin-top: 2px;
    border: 1px solid #6d7886;
    border-radius: 2px;
    background-color: #dbeafa;
}
.close svg {
    width: 8px;
    height: 8px;
}
.dialog-content {
    border: 3px double #111;
    background-color: #fff;
}
#chart {
    width: 100%;
    height: auto;
    font-family: "Liberation Sans", "Noto Sans CJK SC", sans-serif;
    font-size: 11px;
}
#chart .crisp, #timeline {
    shape-rendering: crispEdges;
}
#chart .axis-title {
    font-size: 12px;
}
#chart .cjk {
    font-size: 15px;
}
```

FILE: script.js
```js
function el(parent, name, attrs, text) {
    const node = document.createElementNS('http://www.w3.org/2000/svg', name);
    for (const key in attrs) node.setAttribute(key, attrs[key]);
    if (text !== undefined) node.textContent = text;
    parent.appendChild(node);
    return node;
}

const left = 348.5, right = 1325.5, plotTop = 84.5, bottom = 509.5;
const middle = 297, half = 212;

// Eccentric cam: one eased turn, then it holds still
const turnWidth = 964;
const ratio = 2.27; // (cam radius + roller radius) / eccentricity

function cam(x) {
    const u = Math.min((x - 348) / turnWidth, 1);
    const turn = u * u * (3 - 2 * u);
    const a = turn * 2 * Math.PI;
    const root = Math.sqrt(ratio * ratio - Math.sin(a) ** 2);
    return {
        angle: turn <= 0.5 ? turn * 2 : turn * 2 - 2,
        lift: Math.cos(a) + root - ratio,
        torque: Math.abs(Math.sin(a) * (1 + Math.cos(a) / root)) / 1.095
    };
}

function curve(toY) {
    const points = [];
    for (let x = 348; x <= 1325; x++) points.push(`${x},${toY(cam(x)).toFixed(1)}`);
    return 'M' + points.join('L');
}

function drawChart() {
    const svg = document.getElementById('chart');
    const grid = el(svg, 'g', { class: 'crisp', stroke: '#b8b8b8', 'stroke-dasharray': '1 1' });
    const axes = el(svg, 'g', { class: 'crisp', stroke: '#000' });
    const labels = el(svg, 'g', {});

    for (let i = 0; i <= 20; i++) {
        const x = Math.round(348 + i * 48.85) + 0.5;
        if (i % 2 === 0) {
            if (i > 0 && i < 20) el(grid, 'path', { d: `M${x} ${plotTop}V${bottom}` });
            el(axes, 'path', { d: `M${x} ${bottom - 4}V${bottom + 5}` });
            el(labels, 'text', { x: x - 1, y: 532, 'text-anchor': 'middle' }, (i * 0.13).toFixed(3));
        } else {
            el(axes, 'path', { d: `M${x} ${bottom - 2}V${bottom + 3}` });
        }
    }

    const scales = [
        { x: 226.5, values: ['167', '149', '130', '111', '92'] },
        { x: 294.5, values: ['657344', '493008', '328672', '164336', '0'] },
        { x: left, values: ['180', '90', '0', '-90', '-180'] }
    ];
    for (const s of scales) {
        el(axes, 'path', { d: `M${s.x} ${plotTop}V${bottom}` });
        for (let i = 0; i <= 8; i++) {
            const y = Math.round(84 + i * 53.1) + 0.5;
            const w = i % 2 === 0 ? 5 : 2;
            el(axes, 'path', { d: `M${s.x - w} ${y}H${s.x + w}` });
            if (i % 2 === 0) {
                el(labels, 'text', { x: s.x - 12, y: y + 3.5, 'text-anchor': 'end' }, s.values[i / 2]);
            }
        }
    }
    // current value marks
    el(axes, 'path', { d: 'M221.5 263.500H231.500M343.500 377.500H353.500' });
    [190.5, 297.5, 403.5].forEach(y => el(grid, 'path', { d: `M${left} ${y}H${right}` }));

    el(axes, 'path', { d: `M${left} ${bottom}H${right}` });
    el(svg, 'path', { d: 'M1043.5 85V509', stroke: '#e01010', class: 'crisp' });

    const curves = el(svg, 'g', { fill: 'none', 'stroke-width': 3, 'stroke-linejoin': 'bevel' });
    el(curves, 'path', { d: curve(p => middle - p.angle * half), stroke: '#0064c4' });
    el(curves, 'path', { d: curve(p => middle + half - p.torque * half * 2), stroke: '#e84424' });
    el(curves, 'path', { d: curve(p => middle - p.lift * half), stroke: '#00b000' });
    el(svg, 'path', { d: `M${left} ${plotTop}H${right}V${bottom}`, fill: 'none', stroke: '#000', class: 'crisp' });
    el(svg, 'path', { d: 'M1041 82H1046V87H1041ZM1042 262H1045V264H1042Z' });

    const titles = [
        [189, 345, '线性位移', '1 (mm)'],
        [239, 369, '马达力矩', '2 (newton-mm)'],
        [308, 338, '角位移', '1 (deg)']
    ];
    for (const [x, y, cjk, latin] of titles) {
        const t = el(svg, 'text', { class: 'axis-title', transform: `translate(${x} ${y}) rotate(-90)` });
        el(t, 'tspan', { class: 'cjk' }, cjk);
        el(t, 'tspan', {}, latin);
    }
    el(svg, 'text', { x: 836, y: 547, 'text-anchor': 'middle', class: 'axis-title' }, '时间 (sec)');
}

function drawTimeline() {
    const svg = document.getElementById('timeline');
    const zero = 50, second = 246.2;
    const end = zero + 2.6 * second;

    el(svg, 'rect', { x: 0, y: 0, width: '100%', height: 26, fill: '#c9c9c9' });
    el(svg, 'rect', { x: zero, y: 0, width: end - zero, height: 26, fill: '#ffff80' });
    for (let i = 0; i <= 60; i++) {
        const x = Math.round(zero + i * second / 10) + 0.5;
        const h = i % 10 === 0 ? 22 : i % 5 === 0 ? 8 : 5;
        el(svg, 'path', { d: `M${x} ${25 - h}V25`, stroke: '#666' });
        if (i % 10 === 0) {
            el(svg, 'path', { d: `M${x} 27V400`, stroke: '#bcbfc3' });
            el(svg, 'text', { x: x + 2, y: 15 }, `${i / 10} 秒`);
        }
    }

    el(svg, 'rect', { x: zero, y: 29, width: 633, height: 4, fill: '#ffff00' });
    el(svg, 'rect', { x: zero + 6, y: 47, width: 621, height: 4, fill: '#ffff00' });
    el(svg, 'rect', { x: zero, y: 65, width: end - zero, height: 12, fill: '#ccaa48' });
    [[36, '#1038d8', '#000'], [54, '#1038d8', '#000'], [72, '#8f9296', '#8f9296']].forEach(([y, fill, stroke]) => {
        el(svg, 'path', { d: `M${zero} ${y - 7}L${zero + 3.5} ${y}L${zero} ${y + 7}L${zero - 3.5} ${y}Z`, fill, stroke });
    });

    // time bar with the resize pointer on it
    el(svg, 'rect', { x: 504, y: 0, width: 2, height: 400, fill: '#e07800' });
    el(svg, 'path', { d: 'M497.500 52.500L502 48.500V51.500H515V48.500L519.500 52.500L515 56.500V53.500H502V56.500Z', fill: '#fff', stroke: '#222' });
}

drawChart();
drawTimeline();
```
